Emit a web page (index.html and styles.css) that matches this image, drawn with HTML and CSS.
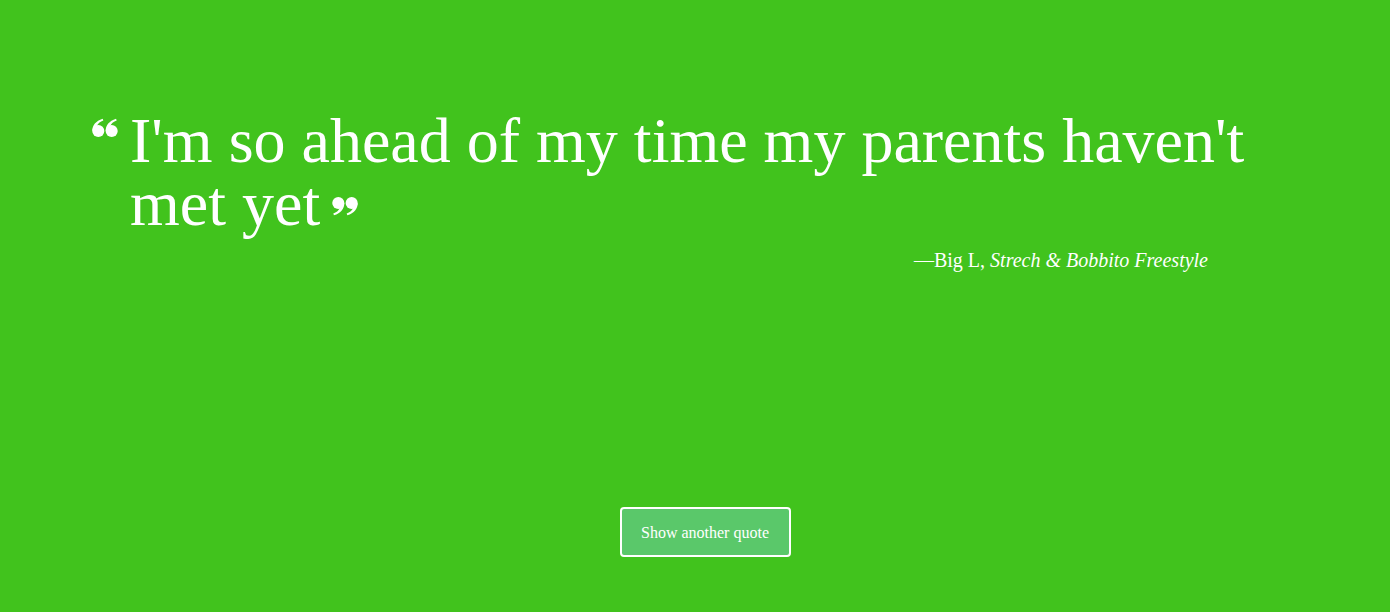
FILE: index.html
```html
<!DOCTYPE html>
<html lang="en">
<head>
<meta charset="utf-8">
<title>Random Quote</title>
<link rel="stylesheet" href="styles.css">
</head>
<body>
<main class="page">
  <section class="quote-box">
    <blockquote class="quote">
      <svg class="q-icon q-left" viewBox="0 0 28 20" aria-hidden="true">
        <circle cx="6.8" cy="13.3" r="6.5"/>
        <path d="M0.3 13.3 C0.3 7 4 2.5 11.5 0 L12.2 2 C7 4.2 5.3 6.5 5.5 9 Z"/>
        <circle cx="21.2" cy="13.3" r="6.5"/>
        <path d="M14.7 13.3 C14.7 7 18.4 2.5 25.9 0 L26.6 2 C21.4 4.2 19.7 6.5 19.9 9 Z"/>
      </svg>
      <p class="quote-text">I'm so ahead of my time my parents haven't met yet<svg class="q-icon q-right" viewBox="0 0 28 20" aria-hidden="true"><g transform="rotate(180 14 10)"><circle cx="6.8" cy="13.3" r="6.5"/><path d="M0.3 13.3 C0.3 7 4 2.5 11.5 0 L12.2 2 C7 4.2 5.3 6.5 5.5 9 Z"/><circle cx="21.2" cy="13.3" r="6.5"/><path d="M14.7 13.3 C14.7 7 18.4 2.5 25.9 0 L26.6 2 C21.4 4.2 19.7 6.5 19.9 9 Z"/></g></svg></p>
    </blockquote>
    <p class="author">—Big L, <cite>Strech &amp; Bobbito Freestyle</cite></p>
  </section>
  <div class="actions">
    <button class="btn" type="button">Show another quote</button>
  </div>
</main>
</body>
</html>
```

FILE: styles.css
```css
* { box-sizing: border-box; }
html, body { margin: 0; height: 100%; }
body {
  background: #41c31d;
  color: #ffffff;
  font-family: "Liberation Serif", "Times New Roman", serif;
}
.page {
  height: 612px;
  display: flex;
  flex-direction: column;
}
.quote-box {
  width: 1262px;
  margin-top: 109px;
  padding-left: 92px;
}
.quote {
  margin: 0;
  display: flex;
  align-items: flex-start;
}
.q-icon { fill: #ffffff; }
.q-left {
  width: 26px;
  height: 20px;
  flex: none;
  margin: 9px 12px 0 0;
}
.quote-text {
  margin: 0;
  font-size: 64px;
  line-height: 63px;
  font-weight: 400;
}
.q-right {
  width: 26px;
  height: 20px;
  margin-left: 12px;
  vertical-align: 9px;
}
.author {
  margin: 13px 0 0;
  text-align: right;
  font-size: 20px;
  line-height: 24px;
  padding-right: 54px;
}
.author cite { font-style: italic; }
.actions {
  margin-top: auto;
  margin-bottom: 55px;
  display: flex;
  justify-content: center;
  padding-left: 20px;
}
.btn {
  width: 171px;
  height: 50px;
  padding-top: 3px;
  background: #5ac86a;
  border: 2px solid #ffffff;
  border-radius: 4px;
  color: #ffffff;
  font-family: "Liberation Serif", serif;
  font-size: 16px;
  cursor: pointer;
}
```
